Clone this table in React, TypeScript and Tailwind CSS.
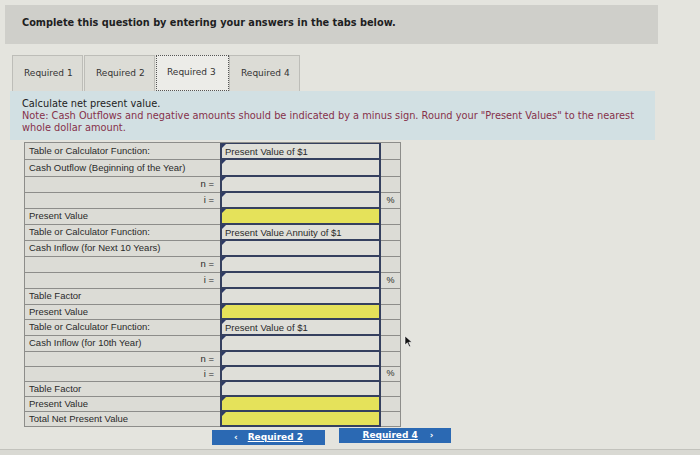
import type { ReactNode } from 'react'

// Tabbed question view — "Required 3": net present value worksheet.
// Label column on the left, navy-bordered input column, and a narrow
// unit column that shows "%" next to the rate inputs.

type Row = {
  label?: string
  side?: 'n' | 'i'
  input?: 'text' | 'plain' | 'yellow'
  text?: string
  h: string
}

const rows: Row[] = [
  { label: 'Table or Calculator Function:', input: 'text', text: 'Present Value of $1', h: 'h-[17px]' },
  { label: 'Cash Outflow (Beginning of the Year)', input: 'plain', h: 'h-[17px]' },
  { side: 'n', input: 'plain', h: 'h-[16px]' },
  { side: 'i', input: 'plain', h: 'h-[16px]' },
  { label: 'Present Value', input: 'yellow', h: 'h-[16px]' },
  { label: 'Table or Calculator Function:', input: 'text', text: 'Present Value Annuity of $1', h: 'h-[16px]' },
  { label: 'Cash Inflow (for Next 10 Years)', input: 'plain', h: 'h-[16px]' },
  { side: 'n', input: 'plain', h: 'h-[16px]' },
  { side: 'i', input: 'plain', h: 'h-[16px]' },
  { label: 'Table Factor', input: 'plain', h: 'h-[16px]' },
  { label: 'Present Value', input: 'yellow', h: 'h-[15px]' },
  { label: 'Table or Calculator Function:', input: 'text', text: 'Present Value of $1', h: 'h-[16px]' },
  { label: 'Cash Inflow (for 10th Year)', input: 'plain', h: 'h-[16px]' },
  { side: 'n', input: 'plain', h: 'h-[15px]' },
  { side: 'i', input: 'plain', h: 'h-[15px]' },
  { label: 'Table Factor', input: 'plain', h: 'h-[15px]' },
  { label: 'Present Value', input: 'yellow', h: 'h-[15px]' },
  { label: 'Total Net Present Value', input: 'yellow', h: 'h-[15px]' },
]

export default function App() {
  return (
    <div className="relative w-[700px] h-[455px] overflow-hidden bg-[#e4e4de] font-['DejaVu_Sans',sans-serif]">
      <div className="pt-[5px] pl-[5px]">
        <div className="flex h-[39px] w-[653px] items-center bg-[#cfcfca] pl-[17px] pb-[3px]">
          <span className="text-[9.75px] font-bold text-[#1e1e22]">
            Complete this question by entering your answers in the tabs below.
          </span>
        </div>
      </div>

      <div className="ml-[12px] mt-[11px] flex h-[36px]">
        <Tab>Required 1</Tab>
        <Tab>Required 2</Tab>
        <Tab active>Required 3</Tab>
        <Tab>Required 4</Tab>
      </div>

      <div className="ml-[10px] w-[645px] bg-[#d2e0e3] pl-[12px] pt-[7px] pb-[6px] text-[9.8px] leading-[12px]">
        <p className="text-[#222]">Calculate net present value.</p>
        <p className="text-[#86304a]">
          Note: Cash Outflows and negative amounts should be indicated by a minus sign. Round your "Present Values" to the
          nearest whole dollar amount.
        </p>
      </div>

      <div className="ml-[24px] mt-[2px] w-[377px] font-['Liberation_Sans',sans-serif] text-[9.5px] text-[#2a2a2a]">
        <div className="border-t border-[#8d8d8a]">
          {rows.map((r, i) => (
            <TableRow key={i} row={r} first={i === 0} />
          ))}
        </div>
      </div>

      <div className="ml-[212px] mt-[3px] flex items-start gap-[14px] text-[9px] font-bold text-white">
        <button className="flex h-[15px] w-[113px] items-center justify-center gap-[10px] bg-[#2b69b3]">
          <span>&lsaquo;</span>
          <span className="underline">Required 2</span>
        </button>
        <button className="-mt-[2px] flex h-[15px] w-[112px] items-center justify-center gap-[12px] bg-[#2b69b3] pl-[6px]">
          <span className="underline">Required 4</span>
          <span>&rsaquo;</span>
        </button>
      </div>

      <div className="absolute bottom-0 left-0 h-[6px] w-full border-t border-[#c2c2bc] bg-[#d9d9d3]" />

      <svg className="absolute left-[404px] top-[335px]" width="9" height="13" viewBox="0 0 9 13">
        <path d="M1 1 L1 10 L3.4 7.8 L5.2 11.8 L6.6 11.2 L4.8 7.3 L8 7.2 Z" fill="#111" stroke="#fff" strokeWidth="0.6" />
      </svg>
    </div>
  )
}

function Tab({ children, active }: { children: ReactNode; active?: boolean }) {
  return (
    <div
      className={
        active
          ? 'flex w-[73px] items-center border border-dotted border-[#555] bg-[#ecece8] pl-[10px] text-[9px] text-[#333]'
          : 'mr-[1px] flex w-[71px] items-center border border-[#bdbdb8] border-b-0 bg-[#dcdcd6] pl-[11px] text-[9px] text-[#333]'
      }
    >
      {children}
    </div>
  )
}

function TableRow({ row, first }: { row: Row; first: boolean }) {
  const inputBg = row.input === 'yellow' ? 'bg-[#e5e25a]' : 'bg-[#dfdfd9]'
  return (
    <div className={`flex ${row.h}`}>
      <div className="flex w-[196px] items-center border-l border-b border-[#8d8d8a] bg-[#dcdcd6] px-[4px]">
        {row.label && <span className="whitespace-nowrap">{row.label}</span>}
        {row.side && <span className="ml-auto pr-[2px]">{row.side === 'n' ? 'n =' : 'i ='}</span>}
      </div>
      <div
        className={`relative w-[161px] border-x-2 border-b-2 border-[#35405f] ${first ? 'border-t-[1px]' : ''} ${inputBg}`}
      >
        <span className="absolute left-0 top-0 h-0 w-0 border-t-[4px] border-r-[4px] border-t-[#2d3a66] border-r-transparent" />
        {row.text && <span className="absolute left-[3px] top-[1px] whitespace-nowrap">{row.text}</span>}
      </div>
      <div className="flex w-[20px] items-center justify-center border-r border-b border-[#8d8d8a] bg-[#dcdcd6] text-[9px]">
        {row.side === 'i' ? '%' : ''}
      </div>
    </div>
  )
}
